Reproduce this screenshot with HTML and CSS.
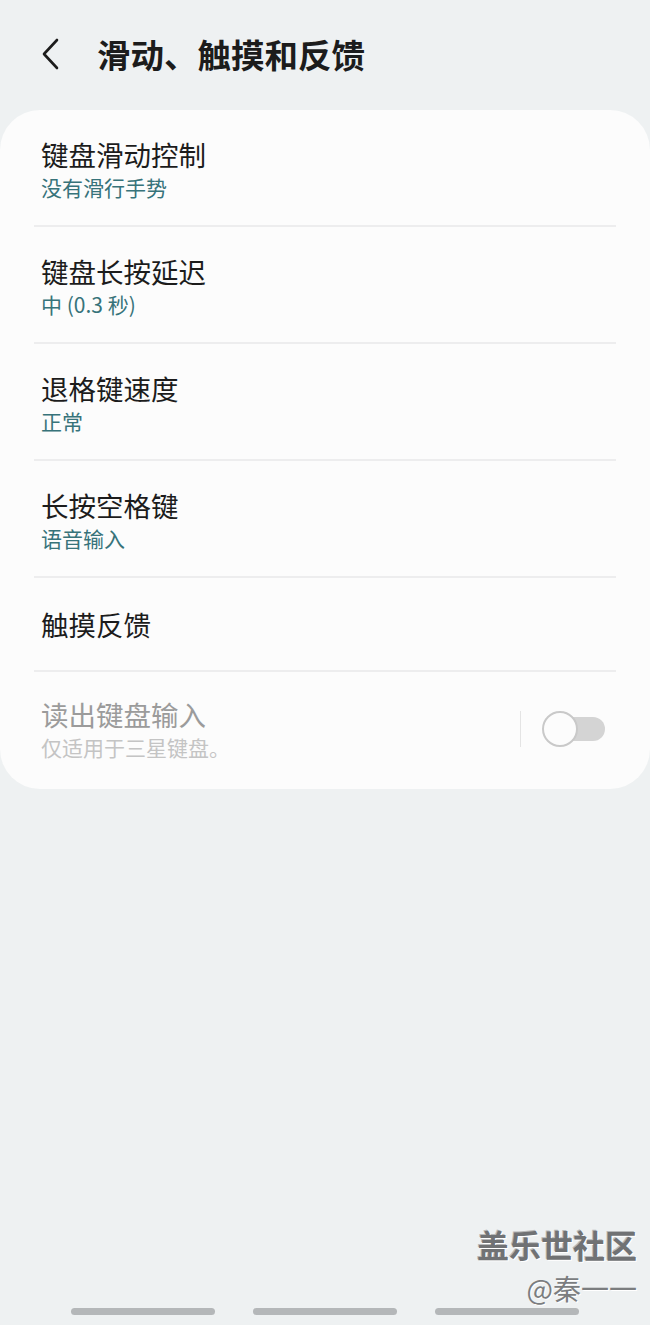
FILE: index.html
```html
<!DOCTYPE html>
<html lang="zh-CN">
<head>
    <meta charset="UTF-8">
    <meta name="viewport" content="width=device-width, initial-scale=1.0">
    <title>滑动、触摸和反馈</title>
    <link rel="stylesheet" href="styles.css">
</head>
<body>
    <div class="screen">
        <header class="topbar">
            <span class="back">
                <svg width="22" height="34" viewBox="0 0 22 34">
                    <path d="M17 3 L4 17 L17 31" fill="none" stroke="#1c1c1c" stroke-width="2.6" stroke-linecap="round" stroke-linejoin="round"/>
                </svg>
            </span>
            <h1>滑动、触摸和反馈</h1>
        </header>

        <div class="card">
            <div class="item">
                <div class="title">键盘滑动控制</div>
                <div class="sub">没有滑行手势</div>
            </div>
            <div class="item">
                <div class="title">键盘长按延迟</div>
                <div class="sub">中 (0.3 秒)</div>
            </div>
            <div class="item">
                <div class="title">退格键速度</div>
                <div class="sub">正常</div>
            </div>
            <div class="item">
                <div class="title">长按空格键</div>
                <div class="sub">语音输入</div>
            </div>
            <div class="item single">
                <div class="title">触摸反馈</div>
            </div>
            <div class="item disabled last">
                <div class="text">
                    <div class="title">读出键盘输入</div>
                    <div class="sub">仅适用于三星键盘。</div>
                </div>
                <div class="switch-wrap">
                    <span class="vline"></span>
                    <span class="switch"><span class="knob"></span></span>
                </div>
            </div>
        </div>

        <footer class="bottom">
            <div class="mark">
                <div class="mark-big">盖乐世社区</div>
                <div class="mark-small">@秦一一</div>
            </div>
            <div class="navbar">
                <span></span>
                <span></span>
                <span></span>
            </div>
        </footer>
    </div>
</body>
</html>
```

FILE: styles.css
```css
* {
    box-sizing: border-box;
}
body {
    margin: 0;
    background-color: #eef1f2;
    font-family: "Noto Sans CJK SC", "Noto Sans", sans-serif;
    color: #1c1c1c;
}
.screen {
    width: 650px;
    min-height: 1325px;
    display: flex;
    flex-direction: column;
}
.topbar {
    height: 110px;
    display: flex;
    align-items: center;
    padding: 0 0 0 40px;
}
.back {
    display: flex;
    width: 57px;
    margin-top: -2px;
}
.topbar h1 {
    margin: 0;
    font-size: 33.5px;
    font-weight: bold;
    line-height: 40px;
    margin-top: -2px;
}
.card {
    background: #fcfcfc;
    border-radius: 40px;
    padding: 0 34px;
}
.item {
    padding: 27px 7px 25px;
    border-bottom: 2px solid #ededee;
}
.item.single {
    padding: 29px 7px 29px;
}
.item.last {
    border-bottom: none;
    display: flex;
    align-items: center;
    padding: 25px 7px 29px;
}
.title {
    font-size: 27.5px;
    line-height: 34px;
}
.sub {
    margin-top: 3px;
    font-size: 21px;
    line-height: 26px;
    color: #37737a;
}
.disabled .title {
    color: #9b9b9b;
}
.disabled .sub {
    color: #c4c4c4;
}
.text {
    flex: 1;
}
.switch-wrap {
    display: flex;
    align-items: center;
    margin-right: 4px;
}
.vline {
    width: 1px;
    height: 36px;
    background: #e4e4e4;
    margin-right: 22px;
}
.switch {
    position: relative;
    width: 60px;
    height: 24px;
    border-radius: 12px;
    background: #d4d4d4;
    margin-left: 2px;
}
.knob {
    position: absolute;
    left: -3px;
    top: -6px;
    width: 36px;
    height: 36px;
    border-radius: 50%;
    background: #fcfcfc;
    border: 2px solid #c9c9c9;
}
.bottom {
    margin-top: auto;
    display: flex;
    flex-direction: column;
}
.mark {
    align-self: flex-end;
    text-align: right;
    padding-right: 13px;
}
.mark-big {
    font-size: 32px;
    line-height: 36px;
    font-weight: bold;
    color: #707274;
    text-shadow: 1px 1px 0 #ffffff, -1px -1px 0 #b7b9ba;
}
.mark-small {
    font-size: 28px;
    line-height: 30px;
    margin-top: 11px;
    color: #7b7d7f;
    text-shadow: 1px 1px 0 #ffffff;
}
.navbar {
    display: flex;
    justify-content: center;
    gap: 38px;
    padding: 5px 0 10px;
}
.navbar span {
    width: 144px;
    height: 7px;
    border-radius: 4px;
    background: #b4b7b9;
}
```
